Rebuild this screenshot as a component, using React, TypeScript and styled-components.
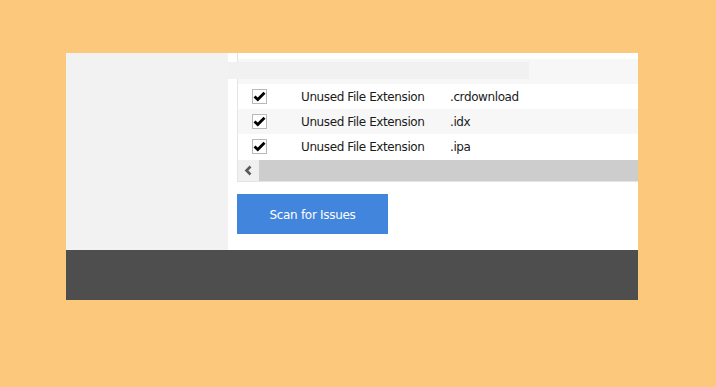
import React from "react";
import styled, { createGlobalStyle } from "styled-components";

const GlobalStyle = createGlobalStyle`
  html, body {
    margin: 0;
    padding: 0;
    background: #fcc87b;
  }
  body {
    font-family: "DejaVu Sans", "Liberation Sans", sans-serif;
  }
`;

const StPage = styled.div`
  width: 716px;
  height: 387px;
  padding: 53px 0 0 66px;
  box-sizing: border-box;
`;

const StWindow = styled.section`
  width: 572px;
  display: grid;
  grid-template-columns: 162px 1fr;
  grid-template-rows: 197px 50px;
`;

const StSidebar = styled.aside`
  background: #f2f2f2;
`;

const StMain = styled.main`
  background: #ffffff;
  padding-left: 9px;
  display: flex;
  flex-direction: column;
  overflow: hidden;
`;

const StTable = styled.div`
  border-left: 1px solid #e4e4e4;
  padding-top: 6px;
`;

const StHeader = styled.div`
  height: 25px;
  background: #f7f7f7;
  padding-top: 3px;
  box-sizing: border-box;
`;

const StHeaderBlock = styled.div`
  margin-left: -10px;
  width: 301px;
  height: 17px;
  background: #f1f1f1;
`;

const StRow = styled.div<{ $alt?: boolean }>`
  height: 25px;
  display: flex;
  align-items: center;
  background: ${(p) => (p.$alt ? "#f7f7f7" : "#ffffff")};
  font-size: 12px;
  letter-spacing: -0.4px;
  color: #1a1a1a;
`;

const StCheckCell = styled.div`
  width: 63px;
  padding-left: 14px;
  box-sizing: border-box;
  display: flex;
`;

const StCheckbox = styled.span`
  width: 15px;
  height: 15px;
  box-sizing: border-box;
  border: 1px solid #b9b9b9;
  background: #fff;
  display: flex;
  align-items: center;
  justify-content: center;
`;

const StType = styled.div`
  width: 149px;
`;

const StExt = styled.div``;

const StScrollbar = styled.div`
  margin-top: 1px;
  height: 22px;
  display: flex;
  border-bottom: 1px solid #e4e4e4;
  box-sizing: border-box;
`;

const StArrow = styled.div`
  width: 21px;
  background: #f0f0f0;
  display: flex;
  align-items: center;
  justify-content: center;
`;

const StTrack = styled.div`
  flex: 1;
  background: #cdcdcd;
`;

const StButton = styled.button`
  margin-top: 12px;
  width: 151px;
  height: 40px;
  padding: 2px 0 0;
  border: none;
  background: #4285dd;
  color: #ffffff;
  font-family: "DejaVu Sans", "Liberation Sans", sans-serif;
  font-size: 12px;
  letter-spacing: -0.3px;
  cursor: pointer;
`;

const StFooter = styled.footer`
  grid-column: 1 / span 2;
  background: #4e4e4e;
`;

const rows = [".crdownload", ".idx", ".ipa"];

function Check() {
  return (
    <svg width="13" height="11" viewBox="0 0 13 11">
      <path
        d="M1.5 5.5 L4.8 8.6 L11.5 1.8"
        fill="none"
        stroke="#000"
        strokeWidth="2.8"
        strokeLinejoin="miter"
      />
    </svg>
  );
}

function ChevronLeft() {
  return (
    <svg width="9" height="11" viewBox="0 0 9 11">
      <path d="M6.5 1.5 L2.5 5.5 L6.5 9.5" fill="none" stroke="#5a5a5a" strokeWidth="2.6" />
    </svg>
  );
}

export default function App() {
  return (
    <StPage>
      <GlobalStyle />
      <StWindow>
        <StSidebar />
        <StMain>
          <StTable>
            <StHeader>
              <StHeaderBlock />
            </StHeader>
            {rows.map((ext, i) => (
              <StRow key={ext} $alt={i % 2 === 1}>
                <StCheckCell>
                  <StCheckbox>
                    <Check />
                  </StCheckbox>
                </StCheckCell>
                <StType>Unused File Extension</StType>
                <StExt>{ext}</StExt>
              </StRow>
            ))}
            <StScrollbar>
              <StArrow>
                <ChevronLeft />
              </StArrow>
              <StTrack />
            </StScrollbar>
          </StTable>
          <StButton>Scan for Issues</StButton>
        </StMain>
        <StFooter />
      </StWindow>
    </StPage>
  );
}
